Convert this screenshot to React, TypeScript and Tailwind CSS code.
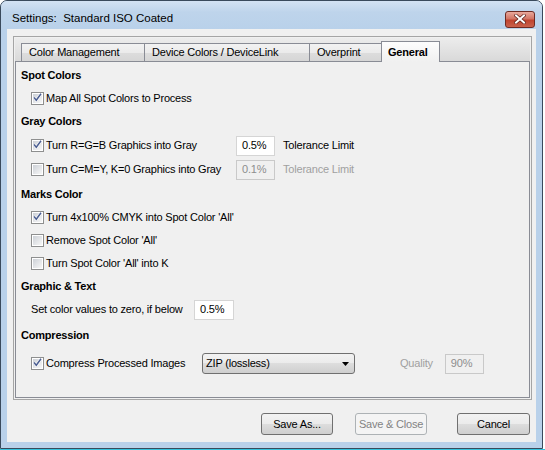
import React from 'react';

function Check({ checked }: { checked?: boolean }) {
  return (
    <span className="w-[13px] h-[13px] shrink-0 border border-[#8e8f8f] bg-white p-[1px] flex">
      <span className="relative flex-1 bg-[linear-gradient(135deg,#cdd1d7,#f7f7f7)] flex items-center justify-center">
        {checked && (
          <svg className="absolute -left-[1px] -top-[2px]" width="11" height="11" viewBox="0 0 11 11">
            <path d="M2 5.5 L4.3 8.3 L9 1.8" fill="none" stroke="#ffffff" strokeWidth="2.6" />
            <path d="M2 5.5 L4.3 8.3 L9 1.8" fill="none" stroke="#4c5f92" strokeWidth="1.5" />
          </svg>
        )}
      </span>
    </span>
  );
}

function Heading({ children, className = '' }: { children: React.ReactNode; className?: string }) {
  return (
    <div className={`h-[23px] flex items-center pl-[5px] font-bold text-[11px] tracking-[-0.2px] ${className}`}>
      {children}
    </div>
  );
}

function CheckRow({
  checked,
  label,
  className = '',
  children,
}: {
  checked?: boolean;
  label: string;
  className?: string;
  children?: React.ReactNode;
}) {
  return (
    <div className={`h-[23px] flex items-center pl-[15px] ${className}`}>
      <Check checked={checked} />
      <span className="ml-[2px] w-[190px] whitespace-nowrap">{label}</span>
      {children}
    </div>
  );
}

function Field({ value, disabled, className = '' }: { value: string; disabled?: boolean; className?: string }) {
  return (
    <div
      className={`h-[20px] w-[39px] border flex items-center pl-[5px] ${
        disabled ? 'border-[#c9c9c9] bg-[#f0f0f0] text-[#8d8d8d]' : 'border-[#d5d5d5] bg-white text-black'
      } ${className}`}
    >
      {value}
    </div>
  );
}

function Tab({ label, width, selected }: { label: string; width: string; selected?: boolean }) {
  if (selected) {
    return (
      <div
        className={`${width} h-[21px] -mb-[1px] border border-b-0 border-[#898c95] bg-[linear-gradient(#fdfdfd,#f0f0f0)] flex items-center pl-[6px] font-bold z-10`}
      >
        {label}
      </div>
    );
  }
  return (
    <div
      className={`${width} h-[18px] border border-b-0 border-[#898c95] -mr-[1px] bg-[linear-gradient(#f2f2f2,#ebebeb_50%,#dddddd_50%,#d6d6d6)] flex items-center pl-[7px]`}
    >
      {label}
    </div>
  );
}

function Button({ label, disabled, className = '' }: { label: string; disabled?: boolean; className?: string }) {
  return (
    <div
      className={`h-[22px] w-[72px] rounded-[3px] border flex items-center justify-center ${
        disabled
          ? 'border-[#adb2b5] bg-[#f4f4f4] text-[#838383]'
          : 'border-[#707070] bg-[linear-gradient(#f2f2f2,#ebebeb_50%,#dddddd_50%,#cfcfcf)] text-black'
      } ${className}`}
    >
      {label}
    </div>
  );
}

export default function App() {
  return (
    <div className="w-[545px] h-[450px] bg-white font-['Liberation_Sans',Arial,sans-serif] text-[11px] tracking-[-0.2px] text-black leading-none">
      {/* window */}
      <div className="w-[543px] h-[449px] border border-[#3a4a5c] rounded-t-[7px] bg-[#b9d1ea] flex flex-col overflow-hidden">
        {/* title bar */}
        <div className="h-[28px] shrink-0 pt-[8px] pl-[11px] pr-[7px] flex items-center justify-between bg-[linear-gradient(#d3e2f3,#bed4eb_40%,#b9d1ea)]">
          <span className="text-[11.5px] tracking-normal text-black">Settings:&nbsp; Standard ISO Coated</span>
          <div className="w-[30px] h-[17px] rounded-[3px] border border-[#6e2a22] bg-[linear-gradient(#e9a99c,#d27565_45%,#c0442f_55%,#c9614c)] flex items-center justify-center">
            <svg width="12" height="10" viewBox="0 0 12 10">
              <path d="M2 1.5 L10 8.5 M10 1.5 L2 8.5" stroke="#5b1f18" strokeWidth="3.4" strokeLinecap="square" />
              <path d="M2 1.5 L10 8.5 M10 1.5 L2 8.5" stroke="#ffffff" strokeWidth="2" strokeLinecap="square" />
            </svg>
          </div>
        </div>

        {/* client area */}
        <div className="mx-[6px] h-[413px] shrink-0 bg-[#f0f0f0] flex flex-col">
          {/* tab frame */}
          <div className="mt-[7px] ml-[6px] w-[519px] h-[364px] border border-[#a5a5a5] p-[1px] flex flex-col">
            {/* tab strip */}
            <div className="h-[23px] shrink-0 flex items-end pl-[6px] bg-[linear-gradient(#ececec,#d9d9d9)]">
              <Tab label="Color Management" width="w-[124px]" />
              <Tab label="Device Colors / DeviceLink" width="w-[166px]" />
              <Tab label="Overprint" width="w-[73px]" />
              <Tab label="General" width="w-[59px]" selected />
            </div>

            {/* content panel */}
            <div className="flex-1 border border-[#898c95] bg-[#f0f0f0] pt-[2px] flex flex-col">
              <Heading>Spot Colors</Heading>
              <CheckRow checked label="Map All Spot Colors to Process" />

              <Heading>Gray Colors</Heading>
              <CheckRow checked label="Turn R=G=B Graphics into Gray" className="mt-[1px]">
                <Field value="0.5%" />
                <span className="ml-[8px]">Tolerance Limit</span>
              </CheckRow>
              <CheckRow label="Turn C=M=Y, K=0 Graphics into Gray" className="mt-[1px]">
                <Field value="0.1%" disabled />
                <span className="ml-[8px] text-[#a0a0a0]">Tolerance Limit</span>
              </CheckRow>

              <Heading className="mt-[2px]">Marks Color</Heading>
              <CheckRow checked label="Turn 4x100% CMYK into Spot Color 'All'" />
              <CheckRow label="Remove Spot Color 'All'" />
              <CheckRow label="Turn Spot Color 'All' into K" />

              <Heading>Graphic &amp; Text</Heading>
              <div className="h-[23px] flex items-center pl-[15px]">
                <span className="w-[163px] whitespace-nowrap">Set color values to zero, if below</span>
                <Field value="0.5%" className="w-[40px]" />
              </div>

              <Heading className="mt-[3px]">Compression</Heading>
              <div className="h-[23px] mt-[5px] flex items-center pl-[15px]">
                <Check checked />
                <span className="ml-[2px] w-[156px] whitespace-nowrap">Compress Processed Images</span>
                <div className="w-[153px] h-[21px] rounded-[3px] border border-[#707070] bg-[linear-gradient(#f2f2f2,#ebebeb_50%,#dddddd_50%,#cfcfcf)] flex items-center justify-between pl-[3px] pr-[5px]">
                  <span>ZIP (lossless)</span>
                  <svg width="7" height="4" viewBox="0 0 7 4">
                    <path d="M0 0 H7 L3.5 4 Z" fill="#000000" />
                  </svg>
                </div>
                <span className="ml-[45px] text-[#a0a0a0]">Quality</span>
                <Field value="90%" disabled className="ml-[12px]" />
              </div>
            </div>
          </div>

          {/* buttons */}
          <div className="mt-[13px] flex items-center">
            <Button label="Save As..." className="ml-[254px]" />
            <Button label="Save & Close" disabled className="ml-[22px]" />
            <Button label="Cancel" className="ml-[30px] w-[73px]" />
          </div>
        </div>
        <div className="flex-1" />
      </div>
      <div className="h-[1px] w-[545px] bg-[#36c2dc]" />
    </div>
  );
}
